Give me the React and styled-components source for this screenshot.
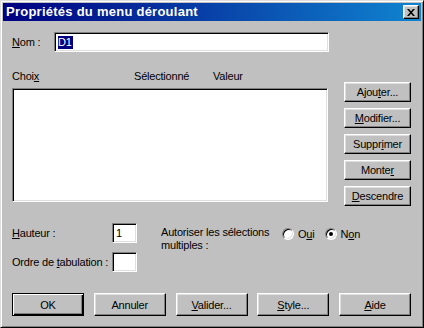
import React from 'react';
import styled, { createGlobalStyle } from 'styled-components';

const GlobalStyle = createGlobalStyle`
  html, body {
    margin: 0;
    padding: 0;
    background: #c0c0c0;
  }
  body {
    font-family: "Liberation Sans", Arial, sans-serif;
    font-size: 11px;
    letter-spacing: -0.2px;
    color: #000;
  }
`;

const Window = styled.div`
  box-sizing: border-box;
  width: 424px;
  height: 328px;
  background: #c0c0c0;
  border: 1px solid;
  border-color: #dfdfdf #000 #000 #dfdfdf;
  box-shadow: inset 1px 1px #fff, inset -1px -1px #808080;
  padding: 2px;
  display: flex;
  flex-direction: column;
`;

const TitleBar = styled.div`
  height: 18px;
  display: flex;
  align-items: center;
  justify-content: space-between;
  padding: 0 2px 0 3px;
  background: linear-gradient(to right, #000080, #1084d0);
  color: #fff;
`;

const Title = styled.span`
  font-weight: bold;
  font-size: 13px;
  letter-spacing: 0.25px;
  line-height: 18px;
  white-space: nowrap;
`;

const CloseButton = styled.button`
  box-sizing: border-box;
  width: 16px;
  height: 14px;
  padding: 0;
  display: grid;
  place-items: center;
  background: #c0c0c0;
  border: 1px solid;
  border-color: #fff #000 #000 #fff;
  box-shadow: inset -1px -1px #808080, inset 1px 1px #dfdfdf;
`;

const Body = styled.div`
  flex: 1;
  display: flex;
  flex-direction: column;
  padding: 11px 10px 0 9px;
`;

const Row = styled.div`
  display: flex;
  align-items: center;
  height: 20px;
`;

const Label = styled.label`
  width: ${p => p.width}px;
  flex-shrink: 0;
  line-height: 13px;
  white-space: nowrap;
`;

const Key = styled.span`
  text-decoration: underline;
  text-underline-offset: 1px;
`;

const Field = styled.div`
  box-sizing: border-box;
  width: ${p => p.width}px;
  height: ${p => p.height || 20}px;
  background: #fff;
  border: 1px solid;
  border-color: #808080 #fff #fff #808080;
  box-shadow: inset 1px 1px #000, inset -1px -1px #dfdfdf;
  padding: 3px 2px 0 3px;
  line-height: 13px;
`;

const Selected = styled.span`
  background: #000080;
  color: #fff;
  padding: 0 1px 1px 0;
`;

const Section = styled.div`
  display: flex;
  margin-top: 18px;
`;

const ListColumn = styled.div`
  display: flex;
  flex-direction: column;
`;

const Headers = styled.div`
  display: grid;
  grid-template-columns: 122px 79px 1fr;
  height: 13px;
  line-height: 13px;
  margin-bottom: 5px;
`;

const ButtonColumn = styled.div`
  display: flex;
  flex-direction: column;
  gap: 6px;
  margin: 12px 0 0 16px;
`;

const Button = styled.button`
  box-sizing: border-box;
  width: ${p => p.width}px;
  height: ${p => p.height}px;
  padding: 0;
  font-family: "Liberation Sans", Arial, sans-serif;
  font-size: 11px;
  letter-spacing: -0.2px;
  color: #000;
  background: #c0c0c0;
  border: 1px solid;
  border-color: ${p => (p.$default ? '#000' : '#fff #000 #000 #fff')};
  box-shadow: ${p =>
    p.$default
      ? 'inset 1px 1px #fff, inset -1px -1px #000, inset -2px -2px #808080'
      : 'inset -1px -1px #808080, inset 1px 1px #dfdfdf'};
`;

const Options = styled.div`
  display: flex;
  margin-top: 17px;
`;

const FieldColumn = styled.div`
  display: flex;
  flex-direction: column;
  gap: 9px;
`;

const AllowText = styled.div`
  margin: 3px 0 0 24px;
  line-height: 13px;
  width: 121px;
`;

const RadioGroup = styled.div`
  display: flex;
  align-items: center;
  height: 13px;
  margin-top: 4px;
`;

const RadioItem = styled.label`
  display: flex;
  align-items: center;
  gap: 4px;
  margin-right: 10px;
`;

const Radio = styled.span`
  box-sizing: border-box;
  position: relative;
  width: 12px;
  height: 12px;
  border-radius: 50%;
  background: #fff;
  border: 1px solid;
  border-color: #808080 #fff #fff #808080;
  box-shadow: inset 1px 1px #000, inset -1px -1px #dfdfdf;

  &::after {
    content: '';
    display: ${p => (p.checked ? 'block' : 'none')};
    position: absolute;
    left: 3px;
    top: 3px;
    width: 4px;
    height: 4px;
    border-radius: 50%;
    background: #000;
  }
`;

const Footer = styled.div`
  display: flex;
  justify-content: space-between;
  width: 399px;
  margin-top: 21px;
`;

export default function App() {
  const sideButtons = [
    ['Ajou', 't', 'er...'],
    ['', 'M', 'odifier...'],
    ['Suppr', 'i', 'mer'],
    ['Monte', 'r', ''],
    ['', 'D', 'escendre'],
  ];
  const footerButtons = [
    ['OK', '', '', true],
    ['Annuler', '', ''],
    ['', 'V', 'alider...'],
    ['', 'S', 'tyle...'],
    ['', 'A', 'ide'],
  ];

  return (
    <>
      <GlobalStyle />
      <Window>
        <TitleBar>
          <Title>Propriétés du menu déroulant</Title>
          <CloseButton type="button" aria-label="Fermer">
            <svg width="8" height="7" viewBox="0 0 8 7">
              <path d="M0 0h2l2 2.2L6 0h2L5 3.5 8 7H6L4 4.8 2 7H0l3-3.5z" fill="#000" />
            </svg>
          </CloseButton>
        </TitleBar>
        <Body>
          <Row>
            <Label width={42}>
              <Key>N</Key>om :
            </Label>
            <Field width={275}>
              <Selected>D1</Selected>
            </Field>
          </Row>

          <Section>
            <ListColumn>
              <Headers>
                <span>
                  Choi<Key>x</Key>
                </span>
                <span>Sélectionné</span>
                <span>Valeur</span>
              </Headers>
              <Field width={316} height={114} />
            </ListColumn>
            <ButtonColumn>
              {sideButtons.map(([a, k, b]) => (
                <Button key={a + k + b} type="button" width={67} height={20}>
                  {a}
                  {k && <Key>{k}</Key>}
                  {b}
                </Button>
              ))}
            </ButtonColumn>
          </Section>

          <Options>
            <FieldColumn>
              <Row>
                <Label width={100}>
                  <Key>H</Key>auteur :
                </Label>
                <Field width={25}>1</Field>
              </Row>
              <Row>
                <Label width={100}>
                  Ordre de <Key>t</Key>abulation :
                </Label>
                <Field width={25} />
              </Row>
            </FieldColumn>
            <AllowText>
              Autoriser les sélections
              <br />
              multiples :
            </AllowText>
            <RadioGroup>
              <RadioItem>
                <Radio />
                <span>
                  O<Key>u</Key>i
                </span>
              </RadioItem>
              <RadioItem>
                <Radio checked />
                <span>
                  N<Key>o</Key>n
                </span>
              </RadioItem>
            </RadioGroup>
          </Options>

          <Footer>
            {footerButtons.map(([a, k, b, def]) => (
              <Button key={a + k + b} type="button" width={72} height={23} $default={def}>
                {a}
                {k && <Key>{k}</Key>}
                {b}
              </Button>
            ))}
          </Footer>
        </Body>
      </Window>
    </>
  );
}
